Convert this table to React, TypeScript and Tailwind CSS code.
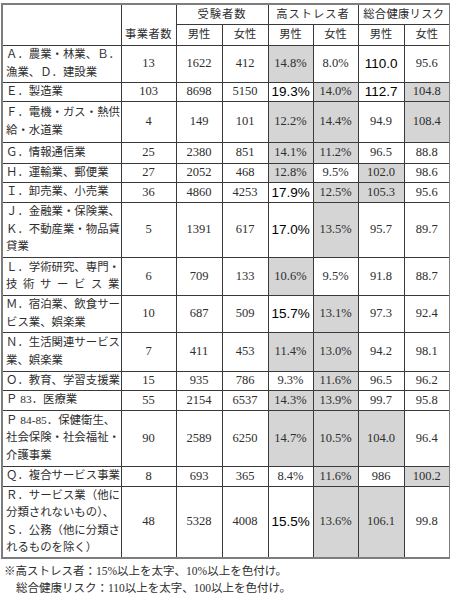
import React from 'react';

type Row = {
  label: string[];
  spread?: number[];
  n: string;
  m: string;
  f: string;
  vals: string[];
  h: string;
};

// value flags: "|b" = bold, "|g" = gray
const rows: Row[] = [
  { label: ['Ａ．農業・林業、Ｂ．', '漁業、Ｄ．建設業'], n: '13', m: '1622', f: '412', vals: ['14.8%|g', '8.0%', '110.0|b', '95.6'], h: 'h-[37px]' },
  { label: ['Ｅ．製造業'], n: '103', m: '8698', f: '5150', vals: ['19.3%|b', '14.0%|g', '112.7|b', '104.8|g'], h: 'h-[19px]' },
  { label: ['Ｆ．電機・ガス・熱供', '給・水道業'], n: '4', m: '149', f: '101', vals: ['12.2%|g', '14.4%|g', '94.9', '108.4|g'], h: 'h-[41px]' },
  { label: ['Ｇ．情報通信業'], n: '25', m: '2380', f: '851', vals: ['14.1%|g', '11.2%|g', '96.5', '88.8'], h: 'h-[21px]' },
  { label: ['Ｈ．運輸業、郵便業'], n: '27', m: '2052', f: '468', vals: ['12.8%|g', '9.5%', '102.0|g', '98.6'], h: 'h-[19px]' },
  { label: ['Ｉ．卸売業、小売業'], n: '36', m: '4860', f: '4253', vals: ['17.9%|b', '12.5%|g', '105.3|g', '95.6'], h: 'h-[20px]' },
  { label: ['Ｊ．金融業・保険業、', 'Ｋ．不動産業・物品賃', '貸業'], n: '5', m: '1391', f: '617', vals: ['17.0%|b', '13.5%|g', '95.7', '89.7'], h: 'h-[55px]' },
  { label: ['Ｌ．学術研究、専門・', '技術サービス業'], spread: [1], n: '6', m: '709', f: '133', vals: ['10.6%|g', '9.5%', '91.8', '88.7'], h: 'h-[38px]' },
  { label: ['Ｍ．宿泊業、飲食サー', 'ビス業、娯楽業'], n: '10', m: '687', f: '509', vals: ['15.7%|b', '13.1%|g', '97.3', '92.4'], h: 'h-[37px]' },
  { label: ['Ｎ．生活関連サービス', '業、娯楽業'], n: '7', m: '411', f: '453', vals: ['11.4%|g', '13.0%|g', '94.2', '98.1'], h: 'h-[39px]' },
  { label: ['Ｏ．教育、学習支援業'], n: '15', m: '935', f: '786', vals: ['9.3%', '11.6%|g', '96.5', '96.2'], h: 'h-[19px]' },
  { label: ['Ｐ 83．医療業'], n: '55', m: '2154', f: '6537', vals: ['14.3%|g', '13.9%|g', '99.7', '95.8'], h: 'h-[20px]' },
  { label: ['Ｐ 84-85．保健衛生、', '社会保険・社会福祉・', '介護事業'], n: '90', m: '2589', f: '6250', vals: ['14.7%|g', '10.5%|g', '104.0|g', '96.4'], h: 'h-[56px]' },
  { label: ['Ｑ．複合サービス事業'], n: '8', m: '693', f: '365', vals: ['8.4%', '11.6%|g', '986', '100.2|g'], h: 'h-[20px]' },
  { label: ['Ｒ．サービス業（他に', '分類されないもの）、', 'Ｓ．公務（他に分類さ', 'れるものを除く）'], n: '48', m: '5328', f: '4008', vals: ['15.5%|b', '13.6%|g', '106.1|g', '99.8'], h: 'h-[72px]' },
];

const serif = 'font-["Liberation_Serif","Noto_Sans_CJK_JP",serif]';
const cell = 'border border-[#3a3a3a] text-center align-middle p-0 leading-[15px]';

function Value({ v }: { v: string }) {
  const [text, flag] = v.split('|');
  const bg = flag === 'g' ? 'bg-[#d5d5d5]' : 'bg-white';
  if (flag === 'b') {
    return (
      <td className={`${cell} ${bg} font-["Liberation_Sans",sans-serif] text-[13.5px] text-black`}>
        {text}
      </td>
    );
  }
  return <td className={`${cell} ${bg} text-[12.5px]`}>{text}</td>;
}

export default function App() {
  return (
    <div className={`w-[450px] h-[593px] overflow-hidden bg-white pl-[1px] pt-[3px] text-[#2e2e2e] ${serif}`}>
      <table className="border-collapse border-2 border-[#7d7d7d] table-fixed w-[448px]">
        <colgroup>
          <col className="w-[119px]" />
          <col className="w-[55px]" />
          <col className="w-[46px]" />
          <col className="w-[46px]" />
          <col className="w-[45px]" />
          <col className="w-[45px]" />
          <col className="w-[46px]" />
          <col className="w-[46px]" />
        </colgroup>
        <thead>
          <tr className="h-[20px] text-[11.3px]">
            <td rowSpan={2} className={cell}></td>
            <td rowSpan={2} className={`${cell} !align-bottom pb-[3px] tracking-[0.5px]`}>事業者数</td>
            <td colSpan={2} className={`${cell} tracking-[1px]`}>受験者数</td>
            <td colSpan={2} className={`${cell} tracking-[1px]`}>高ストレス者</td>
            <td colSpan={2} className={`${cell} tracking-[0.3px]`}>総合健康リスク</td>
          </tr>
          <tr className="h-[21px] text-[11.3px]">
            <td className={cell}>男性</td>
            <td className={cell}>女性</td>
            <td className={cell}>男性</td>
            <td className={cell}>女性</td>
            <td className={cell}>男性</td>
            <td className={cell}>女性</td>
          </tr>
        </thead>
        <tbody>
          {rows.map((r) => (
            <tr key={r.n + r.m} className={r.h}>
              <td className="border border-[#3a3a3a] align-middle pl-[3px] pr-[1px] py-0 text-left text-[11.4px] leading-[17.5px]">
                {r.label.map((line, i) => (
                  <div
                    key={i}
                    className={`whitespace-nowrap ${r.spread?.includes(i) ? '[text-align-last:justify]' : ''}`}
                  >
                    {line}
                  </div>
                ))}
              </td>
              <td className={`${cell} text-[12.5px]`}>{r.n}</td>
              <td className={`${cell} text-[12.5px]`}>{r.m}</td>
              <td className={`${cell} text-[12.5px]`}>{r.f}</td>
              {r.vals.map((v, i) => (
                <Value key={i} v={v} />
              ))}
            </tr>
          ))}
        </tbody>
      </table>
      <div className="mt-[4px] pl-[3px] text-[11.5px] leading-[17px]">
        <div>※高ストレス者：15%以上を太字、10%以上を色付け。</div>
        <div className="pl-[12px]">総合健康リスク：110以上を太字、100以上を色付け。</div>
      </div>
    </div>
  );
}
